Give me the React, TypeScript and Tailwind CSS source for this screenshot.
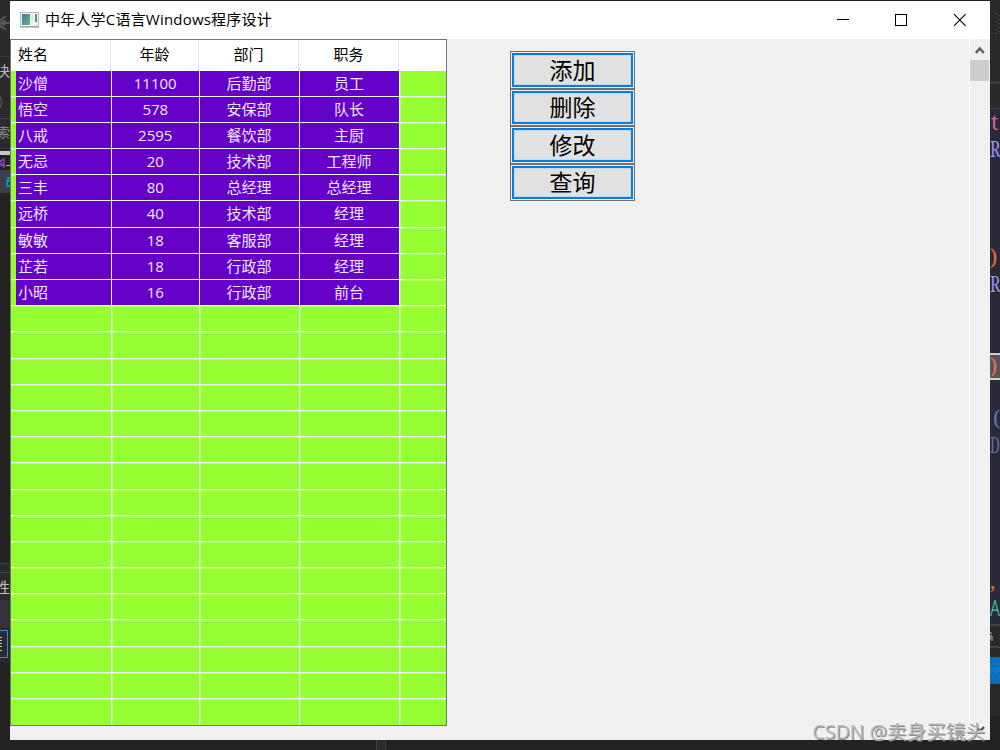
const columns = ['姓名', '年龄', '部门', '职务'];

const staff = [
  ['沙僧', '11100', '后勤部', '员工'],
  ['悟空', '578', '安保部', '队长'],
  ['八戒', '2595', '餐饮部', '主厨'],
  ['无忌', '20', '技术部', '工程师'],
  ['三丰', '80', '总经理', '总经理'],
  ['远桥', '40', '技术部', '经理'],
  ['敏敏', '18', '客服部', '经理'],
  ['芷若', '18', '行政部', '经理'],
  ['小昭', '16', '行政部', '前台'],
];

const actions = ['添加', '删除', '修改', '查询'];
const TOTAL_ROWS = 25;

const colWidths = ['w-[101px]', 'w-[87.5px]', 'w-[100px]', 'w-[100px]'];
const headWidths = ['w-[100px]', 'w-[88px]', 'w-[100px]', 'w-[100px]'];

// code visible past the right side of the window
const codeLines = [
  { text: 't', style: 'h-[27px] text-[#e0628c] pl-px' },
  { text: 'R', style: 'h-[108px] text-[#9a93f0]' },
  { text: ')', style: 'h-[27px] text-[#e8703c]' },
  { text: 'R', style: 'h-[68px] text-[#9a93f0]' },
];

function LeftEdge() {
  return (
    <div className="flex w-[10px] shrink-0 flex-col overflow-hidden bg-[#222222] text-[14px] text-[#b8b8b8]">
      <div className="flex h-[56px] items-start bg-[#2a2a2c] pt-[16px]">
        <svg width="10" height="14" viewBox="0 0 10 14" fill="none" stroke="#57575a" strokeWidth="2">
          <path d="M6 1A6 6 0 1 0 6 13M10 7H2M5 4L2 7L5 10" />
        </svg>
      </div>
      <div className="flex h-[30px] justify-end border-t border-[#3d3d40] bg-[#2a2a2c] leading-[28px]">决</div>
      <div className="flex h-[32px] items-center bg-[#2a2a2c]">
        <svg width="3" height="12" viewBox="0 0 3 12" fill="none" stroke="#606064">
          <path d="M0 0Q3 6 0 12" />
        </svg>
      </div>
      <div className="flex h-[33px] justify-end border-t border-[#444448] bg-[#2a2a2c] text-[13px] leading-[26px] text-[#909090]">
        索
      </div>
      <div className="h-[4px] bg-[#c8c8c8]" />
      <svg className="shrink-0" width="10" height="15" viewBox="0 0 10 15" fill="none">
        <path d="M0 6L4 4V12L0 9M0 5L3 11" stroke="#8745b5" strokeWidth="1.5" />
        <path d="M6 10.5H10" stroke="#b8b8b8" />
      </svg>
      <div className="flex h-[23px] items-center justify-end bg-[#3c4046]">
        <svg width="4" height="11" viewBox="0 0 4 11" fill="none" stroke="#199bd2" strokeWidth="1.5">
          <path d="M4 2H2V5M4 5H1V10H4" />
        </svg>
      </div>
      <div className="h-[370px]" />
      <div className="h-[10px] border-y border-[#404044] bg-[#2a2a2c]" />
      <div className="flex h-[27px] justify-end bg-[#2a2a2c] text-[15px] leading-[28px] text-[#c0c0c0]">性</div>
      <div className="h-[28px] bg-[#333337]" />
      <div className="h-[34px] bg-[#2a2a2c] pt-[2px]">
        <div className="flex h-[28px] w-[8px] items-center border border-l-0 border-[#2f8be0]">
          <svg width="3" height="16" viewBox="0 0 3 16" stroke="#c8c8c8">
            <path d="M0 1.5H2M0 4.5H2M0 7.5H2M0 10.5H2M0 14.5H2" />
          </svg>
        </div>
      </div>
    </div>
  );
}

function RightEdge() {
  return (
    <div className="flex w-[10px] shrink-0 flex-col overflow-hidden bg-[#29292b] font-['Noto_Serif','Liberation_Serif',serif] text-[21px] leading-[26px]">
      <div className="flex h-[81px] shrink-0 items-start justify-end pt-[13px]">
        <svg width="5" height="22" viewBox="0 0 5 22">
          <path d="M1 0V22M4 2V20" stroke="#606064" strokeDasharray="1 3" />
        </svg>
      </div>
      <div className="h-[3px] shrink-0 bg-[#3a3a3e]" />
      <div className="h-[24px] shrink-0" />
      <div className="flex h-[516px] shrink-0 flex-col border-t border-[#454548] bg-[#2a2938]">
        {codeLines.map((line, i) => (
          <div key={i} className={`shrink-0 ${line.style}`}>
            <span className={line.text === 'R' ? 'inline-block origin-left scale-x-75' : 'inline-block'}>{line.text}</span>
          </div>
        ))}
        <div className="mt-[14px] h-[27px] shrink-0 border-y-2 border-[#d0d0d4] bg-[#55555d] leading-[22px] text-[#ee6c42]">)</div>
        <div className="mt-[25px] h-[27px] shrink-0 pl-[3px] text-[#5c76b4]">(</div>
        <div className="h-[27px] shrink-0 text-[#6670a8]">
          <span className="inline-block origin-left scale-x-[0.65]">D</span>
        </div>
        <div className="mt-auto h-[27px] shrink-0 text-[#e06c3c]">,</div>
        <div className="mb-[2px] h-[27px] shrink-0 font-['Open_Sans',sans-serif] text-[#3fb89a]">
          <span className="inline-block origin-left scale-x-75">A</span>
        </div>
      </div>
      <div className="flex h-[24px] shrink-0 items-center border-y-2 border-[#424246]">
        <svg width="4" height="12" viewBox="0 0 4 12" fill="none" stroke="#b8b8b8">
          <path d="M0 2L2 4M0 10V6H2V11" />
        </svg>
      </div>
      <div className="mt-[9px] flex h-[27px] shrink-0 items-center bg-[#0a70bc]">
        <svg width="10" height="8" viewBox="0 0 10 8">
          <path d="M0 2H10M1 5H10" stroke="#4e9bd4" strokeDasharray="1 2" />
        </svg>
      </div>
      <div className="mt-[32px] grow bg-[#222222]" />
    </div>
  );
}

function TitleBar() {
  return (
    <div className="flex h-[38px] items-center bg-white">
      <svg className="ml-[10px]" width="19" height="16" viewBox="0 0 19 16">
        <defs>
          <linearGradient id="pane" x1="0" y1="0" x2="1" y2="1">
            <stop offset="0" stopColor="#4675a8" />
            <stop offset="1" stopColor="#67b588" />
          </linearGradient>
        </defs>
        <rect x="0.5" y="0.5" width="18" height="14" fill="#f1f3f4" stroke="#b5b9bc" />
        <path d="M0 15H19" stroke="#8b9094" />
        <rect x="2" y="2" width="8" height="11" fill="url(#pane)" />
        <rect x="11" y="2" width="2" height="9" fill="#dfe6e6" />
        <rect x="15" y="2" width="2" height="8" fill="#588f90" />
      </svg>
      <span className="ml-[6px] whitespace-nowrap pb-[2px] text-[15px] leading-none tracking-[0.2px]">
        中年人学C语言Windows程序设计
      </span>
      <svg className="ml-auto mr-[24px]" width="130" height="14" viewBox="0 0 130 14" fill="none" stroke="#000">
        <path d="M1 6.5H13" shapeRendering="crispEdges" />
        <rect x="59.5" y="1.5" width="11" height="11" shapeRendering="crispEdges" />
        <path d="M118 1.2L129.6 12.8M129.6 1.2L118 12.8" strokeWidth="1.1" />
      </svg>
    </div>
  );
}

function StaffTable() {
  return (
    <div className="h-[687px] w-[437px] overflow-hidden border border-[#747474] bg-[#96ff32] text-[15px]">
      <div className="flex h-[30.5px] bg-white leading-[28px]">
        {columns.map((title, i) => (
          <div
            key={title}
            className={`${headWidths[i]} shrink-0 border-r border-[#e5e5e5] ${i === 0 ? 'pl-[7px]' : 'text-center'}`}
          >
            {title}
          </div>
        ))}
      </div>
      {Array.from({ length: TOTAL_ROWS }, (_, r) => (
        <div
          key={r}
          className="flex h-[26.2px] border-b border-[#f0f4ee] leading-[25px] text-[#f0e8fa] shadow-[0_1px_0_rgba(240,240,240,0.35)] last:border-b-0"
        >
          {colWidths.map((width, i) => (
            <div key={i} className={`${width} flex shrink-0 border-r border-[#f0f4ee] shadow-[1px_0_0_rgba(240,240,240,0.35)]`}>
              {staff[r] && (
                <div className={`grow bg-[#6400c8] ${i === 0 ? 'ml-[5px] pl-[2px]' : 'text-center'}`}>
                  {staff[r][i]}
                </div>
              )}
            </div>
          ))}
        </div>
      ))}
    </div>
  );
}

function ScrollBar() {
  return (
    <div className="flex w-[21px] flex-col items-center border-l border-white bg-[#f0f0f0]">
      <svg className="mt-[7px] shrink-0" width="10" height="9" viewBox="0 0 10 9" fill="none" stroke="#606060" strokeWidth="2.4">
        <path d="M0.8 7L4.8 2.4L8.8 7" />
      </svg>
      <div className="mr-px mt-[5px] h-[21px] w-[19px] bg-[#cdcdcd]" />
      <svg className="mb-[6px] mt-auto shrink-0" width="10" height="9" viewBox="0 0 10 9" fill="none" stroke="#505050" strokeWidth="2.4">
        <path d="M1 2L5 6.2L9 2" />
      </svg>
    </div>
  );
}

export default function App() {
  return (
    <div className="relative flex h-[750px] w-[1000px] overflow-hidden bg-[#222222] font-['Open_Sans','Noto_Sans_CJK_SC',sans-serif] text-black">
      <LeftEdge />
      <div className="flex grow flex-col pt-px">
        <div className="flex h-[739px] flex-col bg-[#f0f0f0]">
          <TitleBar />
          <div className="flex min-h-0 grow">
            <StaffTable />
            <div className="ml-[63px] mt-[12px] flex h-[150px] w-[125px] flex-col">
              {actions.map((label) => (
                <div key={label} className="flex h-[37.5px] border border-[#707070] p-px">
                  <button className="grow border-2 border-[#0a7cdb] bg-[#e1e1e1] pt-px text-[23px] leading-none shadow-[inset_0_0_0_1px_#c5d9ea]">
                    {label}
                  </button>
                </div>
              ))}
            </div>
            <div className="ml-auto flex">
              <ScrollBar />
            </div>
          </div>
        </div>
        <div className="ml-[366px] h-[10px] w-[10px] border-x border-[#3e3e44] bg-[#2a2a2e]" />
      </div>
      <RightEdge />
      {/* watermark */}
      <div className="absolute bottom-[5px] right-[15px] whitespace-nowrap text-[19.6px] leading-[26px] text-[#b8b8b8] [text-shadow:1px_1px_0_#8a8a8a,-1px_-1px_0_#fafafa]">
        CSDN @卖身买镜头
      </div>
    </div>
  );
}
